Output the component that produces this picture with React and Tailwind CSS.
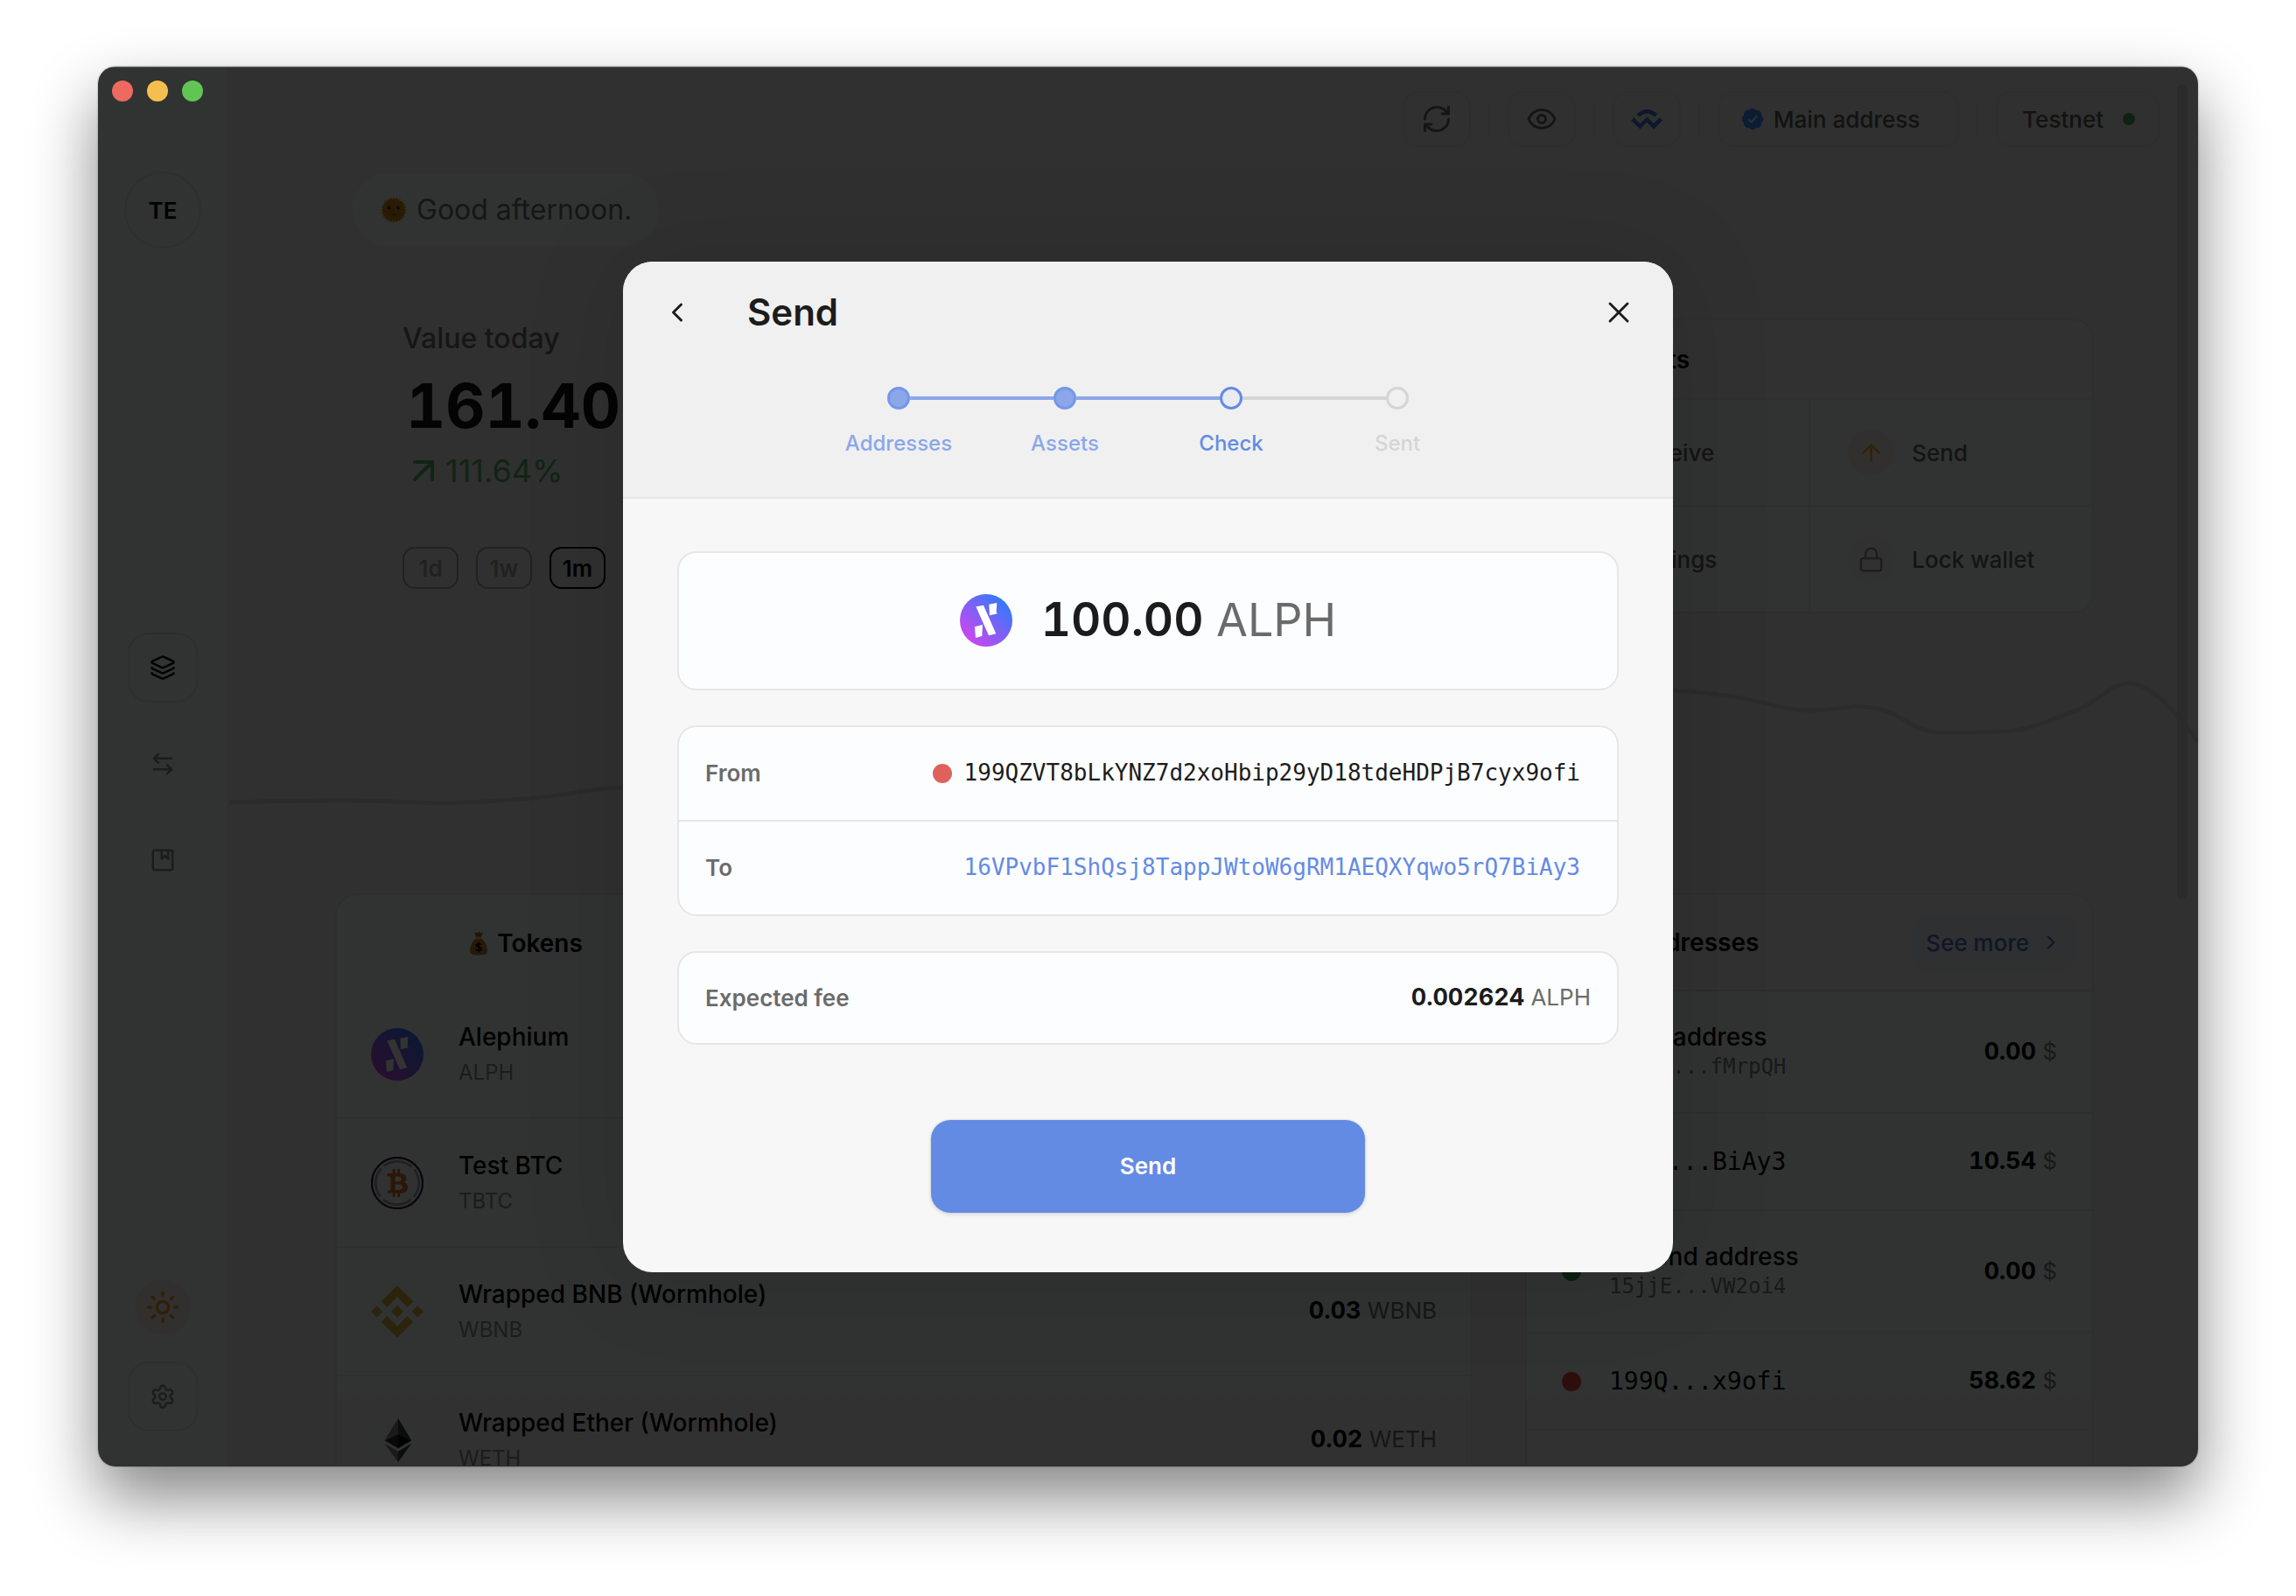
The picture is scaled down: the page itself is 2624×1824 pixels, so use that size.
import React from 'react'
import {
  Album,
  ArrowLeftRight,
  ArrowUp,
  ArrowDown,
  ChevronLeft,
  ChevronRight,
  Eye,
  Layers,
  Lock,
  RefreshCw,
  Settings,
  Sun,
  X
} from 'lucide-react'
import { FaBtc } from 'react-icons/fa'

/* ---------- Logos and small drawings ---------- */

function AlephiumLogo() {
  return (
    <svg viewBox="111 117 180 180" className="size-[60px] shrink-0" aria-hidden="true">
      <defs>
        <linearGradient id="alph" x1="0.12" y1="0.9" x2="0.88" y2="0.1">
          <stop offset="0" stopColor="#d045ee" />
          <stop offset="1" stopColor="#2e7bfa" />
        </linearGradient>
      </defs>
      <circle cx="201" cy="207" r="90" fill="url(#alph)" />
      <g fill="#fff">
        <path d="M211 152 L238 147 L236 180 L240 184 L213 190 Z" />
        <path d="M166 160 L192 155 L235 253 L210 259 Z" />
        <path d="M162 229 L189 222 L187 261 L165 267 Z" />
      </g>
    </svg>
  )
}

function BtcLogo() {
  return (
    <svg viewBox="0 0 180 180" className="size-[60px] shrink-0" aria-hidden="true">
      <circle cx="90" cy="90" r="87" fill="#f4f2f4" stroke="#28243c" strokeWidth="7" />
      <circle
        cx="90"
        cy="90"
        r="74"
        fill="none"
        stroke="#a09aae"
        strokeWidth="8"
        strokeDasharray="104 12.2"
        strokeDashoffset="-64"
      />
      <FaBtc x="43" y="42" size={96} color="#d8762c" />
    </svg>
  )
}

function BnbLogo() {
  return (
    <svg viewBox="72 537 180 180" className="size-[60px] shrink-0" fill="#dcaf3c" aria-hidden="true">
      <path d="M162 538 217 592 197 612 162 577 127 612 107 592Z" />
      <path d="M162 716 217 662 197 642 162 677 127 642 107 662Z" />
      <path d="M162 606 183 627 162 648 141 627Z" />
      <path d="M92 607 112 627 92 647 72 627Z" />
      <path d="M232 607 252 627 232 647 212 627Z" />
    </svg>
  )
}

function EthLogo() {
  return (
    <svg viewBox="72 978 180 180" className="size-[60px] shrink-0" aria-hidden="true">
      <circle cx="162" cy="1068" r="90" fill="#eff4f2" />
      <path d="M165 993 119 1069 165 1047Z" fill="#828282" />
      <path d="M165 993 211 1069 165 1047Z" fill="#3c3c3c" />
      <path d="M119 1069 165 1047 165 1096Z" fill="#2d2d2d" />
      <path d="M211 1069 165 1047 165 1096Z" fill="#0a0a0a" />
      <path d="M119 1079 165 1106 165 1143Z" fill="#828282" />
      <path d="M211 1079 165 1106 165 1143Z" fill="#3c3c3c" />
    </svg>
  )
}

function WalletConnectLogo() {
  return (
    <svg
      viewBox="822 96 114 84"
      className="h-[28px] w-[38px]"
      fill="none"
      stroke="#4377d8"
      strokeWidth="14"
      aria-hidden="true"
    >
      <path d="M849 126 Q880 98 911 126" />
      <path d="M830 138 856 163 880 140 903 163 928 138" strokeLinejoin="miter" />
    </svg>
  )
}

function VerifiedBadge() {
  return (
    <svg viewBox="0 0 24 24" className="size-[28px]" aria-hidden="true">
      <path
        fill="#3b8eff"
        stroke="#3b8eff"
        d="M3.85 8.62a4 4 0 0 1 4.78-4.77 4 4 0 0 1 6.74 0 4 4 0 0 1 4.78 4.78 4 4 0 0 1 0 6.74 4 4 0 0 1-4.77 4.78 4 4 0 0 1-6.75 0 4 4 0 0 1-4.78-4.77 4 4 0 0 1 0-6.76Z"
      />
      <path d="m8 12.5 3 2.5 5-6" fill="none" stroke="#e6eeff" strokeWidth="1.8" />
    </svg>
  )
}

const rays = Array.from({ length: 24 }, (_, i) => i * 15)

function SunFace() {
  return (
    <svg viewBox="0 0 32 32" className="size-[32px]" aria-hidden="true">
      {rays.map((a) => (
        <path key={a} d="M14.4 4 16 0.8 17.6 4Z" fill="#e89a1c" transform={`rotate(${a} 16 16)`} />
      ))}
      <circle cx="16" cy="16" r="13" fill="#d98a14" />
      <circle cx="16" cy="16" r="10" fill="#c9801a" />
      <ellipse cx="10.8" cy="13.6" rx="1.7" ry="2" fill="#2a1a05" />
      <ellipse cx="21.2" cy="13.6" rx="1.7" ry="2" fill="#2a1a05" />
      <circle cx="11.3" cy="13" r="0.6" fill="#fff" />
      <circle cx="21.7" cy="13" r="0.6" fill="#fff" />
      <path d="M13 20.6 Q16 22.4 19 20.6" fill="none" stroke="#7a4506" strokeWidth="1.4" />
      <path d="M15 17.6 Q16 18.4 17 17.6" fill="none" stroke="#8a5208" strokeWidth="1" />
    </svg>
  )
}

function MoneyBag() {
  return (
    <svg viewBox="0 0 22 28" className="h-[28px] w-[22px]" aria-hidden="true">
      <path d="M6 1 9 2.4 11 0.6 13 2.4 16 1 13.6 8H8.4Z" fill="#a86f26" />
      <path d="M8 8.5H14C17 11 21 16 21 22 21 26 19 27.6 11 27.6S1 26 1 22C1 16 5 11 8 8.5Z" fill="#b97d2c" />
      <rect x="7.4" y="6.6" width="7.2" height="2.4" rx="1.2" fill="#f0c050" />
      <path
        d="M14 15.6C13.4 14.2 8.4 13.8 8.4 16.4 8.4 19 14 17.6 14 20.4 14 23 8.6 22.6 8 20.8M11.2 12.6V24.4"
        fill="none"
        stroke="#141008"
        strokeWidth="1.7"
      />
    </svg>
  )
}

/* ---------- Wallet overview behind the dialog ---------- */

function Sidebar() {
  return (
    <aside className="flex w-[150px] shrink-0 flex-col items-center border-r-2 border-[#e4e8e6] bg-[#f0fffa] pt-[120px] pb-[40px]">
      <button className="size-[88px] rounded-full border-2 border-[#e2e6e4] text-[26px] font-semibold text-black">
        TE
      </button>
      <nav className="mt-[439px] flex flex-col gap-[30px]">
        <a
          href="#overview"
          aria-label="Overview"
          className="flex size-[80px] items-center justify-center rounded-[24px] border-2 border-[#e2e6e4] text-black"
        >
          <Layers size={30} strokeWidth={2} />
        </a>
        <a href="#transfers" aria-label="Transfers" className="flex size-[80px] items-center justify-center text-[#8c8c8c]">
          <ArrowLeftRight size={30} strokeWidth={2} />
        </a>
        <a href="#addresses" aria-label="Addresses" className="flex size-[80px] items-center justify-center text-[#8c8c8c]">
          <Album size={30} strokeWidth={2} />
        </a>
      </nav>
      <div className="mt-auto flex flex-col items-center gap-[30px]">
        <button
          aria-label="Theme"
          className="flex size-[64px] items-center justify-center rounded-full bg-[#faefe8] text-[#f5962a]"
        >
          <Sun size={40} strokeWidth={2} />
        </button>
        <button
          aria-label="Settings"
          className="flex size-[80px] items-center justify-center rounded-[24px] border-2 border-[#e2e6e4] text-[#8c8c8c]"
        >
          <Settings size={30} strokeWidth={2} />
        </button>
      </div>
    </aside>
  )
}

function Separator() {
  return <span className="h-[40px] w-[2px] bg-[#e6e6e6]" />
}

function TopBar() {
  const square =
    'flex h-[64px] w-[78px] items-center justify-center rounded-[18px] border-2 border-[#e6e6e6] text-[#696969]'
  return (
    <header className="flex h-[120px] shrink-0 items-center justify-end gap-[20px] pr-[44px]">
      <button aria-label="Refresh" className={square}>
        <RefreshCw size={36} />
      </button>
      <Separator />
      <button aria-label="Discreet mode" className={square}>
        <Eye size={36} />
      </button>
      <Separator />
      <button aria-label="WalletConnect" className={square}>
        <WalletConnectLogo />
      </button>
      <Separator />
      <button className="flex h-[64px] items-center gap-[10px] rounded-[18px] border-2 border-[#e6e6e6] pr-[43px] pl-[24px] text-[26px] font-medium text-[#5a5a5a]">
        <VerifiedBadge />
        Main address
      </button>
      <Separator />
      <button className="flex h-[64px] items-center gap-[22px] rounded-[18px] border-2 border-[#e6e6e6] pr-[26px] pl-[28px] text-[26px] font-medium text-[#5a5a5a]">
        Testnet
        <span className="size-[14px] rounded-full bg-[#4aa55c]" />
      </button>
    </header>
  )
}

function WorthChart() {
  return (
    <svg
      viewBox="0 0 2250 200"
      preserveAspectRatio="none"
      className="absolute inset-x-0 top-[680px] h-[200px] w-full"
      fill="none"
      stroke="#d8d8d8"
      strokeWidth="5"
      aria-hidden="true"
    >
      <path d="M0 161 C40 160 110 158 156 159 S210 162 240 162 S330 158 366 154 S420 144 451 144 C700 140 900 60 1200 70 S1500 28 1651 33 C1750 39 1770 56 1805 56 S1850 49 1880 53 C1915 60 1925 80 1951 81 S1990 81 2026 80 S2080 66 2106 58 S2150 25 2171 25 S2220 50 2250 92" />
    </svg>
  )
}

const periods = ['1d', '1w', '1m', '1y']

function Overview() {
  return (
    <div className="pt-[3px] pl-[77px]">
      <div className="text-[32px] leading-[40px] font-medium text-[#6e6e6e]">Value today</div>
      <div className="mt-[17px] pl-[4px] text-[70px] leading-[80px] font-bold text-[#141414] tabular-nums">161.40 $</div>
      <div className="mt-[12px] flex items-center gap-[13px] pl-[12px] text-[36px] leading-[44px] text-[#50b468]">
        <svg viewBox="6 6 12 12" className="size-[24px]" fill="none" stroke="currentColor" strokeWidth="2" strokeLinecap="round" aria-hidden="true">
          <path d="M7 7h10v10M7 17 17 7" />
        </svg>
        111.64%
      </div>
      <div className="mt-[65px] flex gap-[20px]">
        {periods.map((p) => (
          <button
            key={p}
            className={
              p === '1m'
                ? 'h-[48px] w-[64px] rounded-[14px] border-2 border-black text-[26px] font-semibold text-black'
                : 'h-[48px] w-[64px] rounded-[14px] border-2 border-[#a5a5a5] text-[26px] font-semibold text-[#a5a5a5]'
            }
          >
            {p}
          </button>
        ))}
      </div>
    </div>
  )
}

const shortcuts = [
  { label: 'Receive', Icon: ArrowDown, tint: 'bg-[#e8f8ee] text-[#50b468]' },
  { label: 'Send', Icon: ArrowUp, tint: 'bg-[#faf0ea] text-[#e8a420]' },
  { label: 'Settings', Icon: Settings, tint: 'bg-[#f8f2f3] text-[#8c8c8c]' },
  { label: 'Lock wallet', Icon: Lock, tint: 'bg-[#f8f2f3] text-[#8c8c8c]' }
]

function Shortcuts() {
  return (
    <section className="overflow-hidden rounded-[24px] border-2 border-[#e6e6e6] bg-[#f4f2f2]">
      <h2 className="flex h-[89px] items-center pl-[54px] text-[28px] font-semibold text-black">Shortcuts</h2>
      <div className="grid grid-cols-2 gap-[2px] border-t-2 border-[#e6eae8] bg-[#e6eae8]">
        {shortcuts.map(({ label, Icon, tint }) => (
          <button
            key={label}
            className="flex h-[120px] items-center gap-[20px] bg-[#f0fffa] pl-[42px] text-[26px] font-medium text-[#646464]"
          >
            <span className={`flex size-[54px] items-center justify-center rounded-full ${tint}`}>
              <Icon size={31} strokeWidth={1.8} />
            </span>
            {label}
          </button>
        ))}
      </div>
    </section>
  )
}

const tokens = [
  { name: 'Alephium', symbol: 'ALPH', Logo: AlephiumLogo },
  { name: 'Test BTC', symbol: 'TBTC', Logo: BtcLogo },
  { name: 'Wrapped BNB (Wormhole)', symbol: 'WBNB', Logo: BnbLogo, amount: '0.03' },
  { name: 'Wrapped Ether (Wormhole)', symbol: 'WETH', Logo: EthLogo, amount: '0.02' }
]

const panel =
  'overflow-hidden rounded-t-[26px] border-2 border-[#e6e6e6] bg-[linear-gradient(to_bottom,#f0fffa_560px,#f8f4f4_580px)]'

function Tokens() {
  return (
    <section className={panel}>
      <h2 className="flex h-[109px] w-1/3 items-center justify-center gap-[10px] text-[28px] font-semibold text-black">
        <MoneyBag />
        Tokens
      </h2>
      <ul>
        {tokens.map(({ name, symbol, Logo, amount }) => (
          <li key={name} className="flex h-[147px] items-center border-b-2 border-[#e6eae8] px-[39px]">
            <Logo />
            <div className="ml-[40px] grow pt-[2px]">
              <div className="text-[28px] leading-[40px] font-medium text-black">{name}</div>
              <div className="text-[24px] leading-[42px] text-[#8c8c8c]">{symbol}</div>
            </div>
            {amount && (
              <div className="text-[26px] text-[#6e6e6e]">
                <span className="text-[27px] font-bold text-black tabular-nums">{amount}</span> {symbol}
              </div>
            )}
          </li>
        ))}
      </ul>
    </section>
  )
}

const addresses = [
  { name: 'Main address', hash: '1DrDy...fMrpQH', worth: '0.00', dot: 'bg-[#3b8eff]' },
  { hash: '16VP...BiAy3', worth: '10.54', dot: 'bg-[#f0b040]' },
  { name: 'Second address', hash: '15jjE...VW2oi4', worth: '0.00', dot: 'bg-[#3c9c50]' },
  { hash: '199Q...x9ofi', worth: '58.62', dot: 'bg-[#e0463c]' }
]

const mono = "font-['DejaVu_Sans_Mono','Liberation_Mono',monospace]"

function Addresses() {
  return (
    <section className={panel}>
      <div className="flex h-[110px] items-center justify-between border-b-2 border-[#e6e6e6] bg-[#f4f3f3] pr-[18px] pl-[55px]">
        <h2 className="text-[28px] font-semibold text-black">Your addresses</h2>
        <button className="flex h-[64px] items-center gap-[12px] rounded-[18px] bg-[#eceef4] pr-[16px] pl-[15px] text-[26px] font-medium text-[#4a70c8]">
          See more
          <ChevronRight size={26} />
        </button>
      </div>
      <ul>
        {addresses.map(({ name, hash, worth, dot }) => (
          <li
            key={hash}
            className={
              name
                ? 'flex h-[140px] items-center border-b-2 border-[#e6eae8] px-[40px]'
                : 'flex h-[111px] items-center border-b-2 border-[#e6eae8] px-[40px]'
            }
          >
            <span className={`size-[22px] shrink-0 rounded-full ${dot}`} />
            <div className="ml-[32px] grow">
              {name ? (
                <>
                  <div className="text-[28px] leading-[34px] font-medium text-black">{name}</div>
                  <div className={`${mono} text-[24px] leading-[34px] text-[#7d7d7d]`}>{hash}</div>
                </>
              ) : (
                <div className={`${mono} text-[28px] leading-[34px] text-black`}>{hash}</div>
              )}
            </div>
            <div className="text-[26px] text-[#7d7d7d]">
              <span className="text-[27px] font-bold text-black tabular-nums">{worth}</span> $
            </div>
          </li>
        ))}
      </ul>
    </section>
  )
}

/* ---------- Send dialog ---------- */

const blueSoft = 'bg-[#8ba7ea]'
const grey = 'bg-[#d5d5d5]'

const steps = [
  { label: 'Addresses', text: 'text-[#8ba7ea]', circle: 'bg-[#8ba7ea] border-[#7597e7]', left: '', right: blueSoft },
  { label: 'Assets', text: 'text-[#8ba7ea]', circle: 'bg-[#8ba7ea] border-[#7597e7]', left: blueSoft, right: blueSoft },
  { label: 'Check', text: 'text-[#648be4]', circle: 'bg-[#e9ebf0] border-[#648be4]', left: blueSoft, right: grey },
  { label: 'Sent', text: 'text-[#d5d5d5]', circle: 'border-[#d5d5d5]', left: grey, right: '' }
]

function Stepper() {
  return (
    <ol className="mx-[220px] mt-[55px] flex">
      {steps.map((s) => (
        <li key={s.label} className="flex flex-1 flex-col items-center">
          <div className="flex w-full items-center">
            <span className={`h-[4px] flex-1 ${s.left}`} />
            <span className={`size-[26px] rounded-full border-3 ${s.circle}`} />
            <span className={`h-[4px] flex-1 ${s.right}`} />
          </div>
          <span className={`mt-[23px] text-[24px] leading-[32px] font-medium ${s.text}`}>{s.label}</span>
        </li>
      ))}
    </ol>
  )
}

const card = 'rounded-[22px] border-2 border-[#e6e6e6] bg-[#fcfdff]'

function SendDialog() {
  return (
    <div
      role="dialog"
      aria-modal="true"
      aria-labelledby="send-title"
      className="w-[1200px] max-w-full overflow-hidden rounded-[34px] bg-[#f7f7f7] shadow-[0_0_120px_rgba(0,0,0,0.12)]"
    >
      <header className="border-b-2 border-[#e6e6e6] bg-[#f0f0f0] pt-[28px] pb-[45px]">
        <div className="flex items-center px-[32px]">
          <button aria-label="Back" className="flex size-[60px] items-center justify-center text-[#1c1c1c]">
            <ChevronLeft size={36} />
          </button>
          <h1 id="send-title" className="ml-[50px] grow text-[42px] leading-[60px] font-semibold text-[#1c1c1c]">
            Send
          </h1>
          <button aria-label="Close" className="flex size-[60px] items-center justify-center text-[#1c1c1c]">
            <X size={40} strokeWidth={1.7} />
          </button>
        </div>
        <Stepper />
      </header>

      <div className="flex flex-col gap-[40px] px-[62px] pt-[60px] pb-[68px]">
        <div className={`${card} flex h-[159px] items-center justify-center gap-[33px]`}>
          <AlephiumLogo />
          <div className="text-[52px] text-[#6b6b6b]">
            <span className="text-[53px] font-semibold text-[#1c1c1c] tabular-nums">100.00</span> ALPH
          </div>
        </div>

        <dl className={card}>
          <div className="flex h-[108px] items-center justify-between border-b-2 border-[#e6e6e6] pr-[42px] pl-[30px]">
            <dt className="text-[26px] font-semibold text-[#6b6b6b]">From</dt>
            <dd className={`${mono} flex items-center gap-[14px] text-[26px] text-[#1c1c1c]`}>
              <span className="size-[22px] rounded-full bg-[#de615c]" />
              199QZVT8bLkYNZ7d2xoHbip29yD18tdeHDPjB7cyx9ofi
            </dd>
          </div>
          <div className="flex h-[106px] items-center justify-between pr-[42px] pl-[30px]">
            <dt className="text-[26px] font-semibold text-[#6b6b6b]">To</dt>
            <dd className={`${mono} text-[26px] text-[#648be4]`}>
              16VPvbF1ShQsj8TappJWtoW6gRM1AEQXYqwo5rQ7BiAy3
            </dd>
          </div>
        </dl>

        <dl className={`${card} flex h-[107px] items-center justify-between px-[30px]`}>
          <dt className="text-[26px] font-semibold text-[#6b6b6b]">Expected fee</dt>
          <dd className="text-[26px] text-[#6b6b6b]">
            <span className="text-[27px] font-bold text-[#1c1c1c] tabular-nums">0.002624</span> ALPH
          </dd>
        </dl>

        <button className="mx-auto mt-[46px] h-[106px] w-[496px] rounded-[22px] bg-[#648be4] text-[26px] font-semibold text-white shadow-[0_2px_5px_rgba(0,0,0,0.12),0_0_2px_1px_rgba(0,0,0,0.06)]">
          Send
        </button>
      </div>
    </div>
  )
}

function TrafficLights() {
  return (
    <div className="absolute top-[16px] left-[16px] z-20 flex gap-[16px]">
      <button aria-label="Close window" className="size-[24px] rounded-full bg-[#ed6a5e]" />
      <button aria-label="Minimize window" className="size-[24px] rounded-full bg-[#f5bf4f]" />
      <button aria-label="Zoom window" className="size-[24px] rounded-full bg-[#61c554]" />
    </div>
  )
}

export default function App() {
  return (
    <div className="flex h-screen flex-col bg-white px-[112px] pt-[76px] pb-[148px] font-['Inter',sans-serif]">
      <div className="relative flex min-h-0 flex-1 overflow-hidden rounded-[20px] bg-[#f0f0f0] shadow-[0_0_2px_rgba(0,0,0,0.4),0_36px_75px_rgba(0,0,0,0.48)]">
        <Sidebar />
        <main className="relative flex min-w-0 flex-1 flex-col overflow-hidden">
          <WorthChart />
          <TopBar />
          <div className="relative shrink-0 pr-[119px] pl-[121px]">
            <div className="mt-[2px] ml-[20px] flex h-[84px] w-fit items-center gap-[10px] rounded-full bg-[#f0fffa] px-[31px] text-[32px] text-[#6e6e6e]">
              <SunFace />
              Good afternoon.
            </div>
            <div className="mt-[82px] grid grid-cols-[2fr_1fr] gap-[60px]">
              <Overview />
              <Shortcuts />
            </div>
            <div className="mt-[320px] grid grid-cols-[2fr_1fr] gap-[60px]">
              <Tokens />
              <Addresses />
            </div>
          </div>
          <div className="absolute top-[20px] right-[12px] h-[932px] w-[12px] rounded-full bg-[#d6d6d6]" />
        </main>

        <div className="absolute inset-0 z-10 flex items-center justify-center bg-black/80 shadow-[inset_0_1px_0_rgba(255,255,255,0.3)]">
          <SendDialog />
        </div>
        <TrafficLights />
      </div>
    </div>
  )
}
